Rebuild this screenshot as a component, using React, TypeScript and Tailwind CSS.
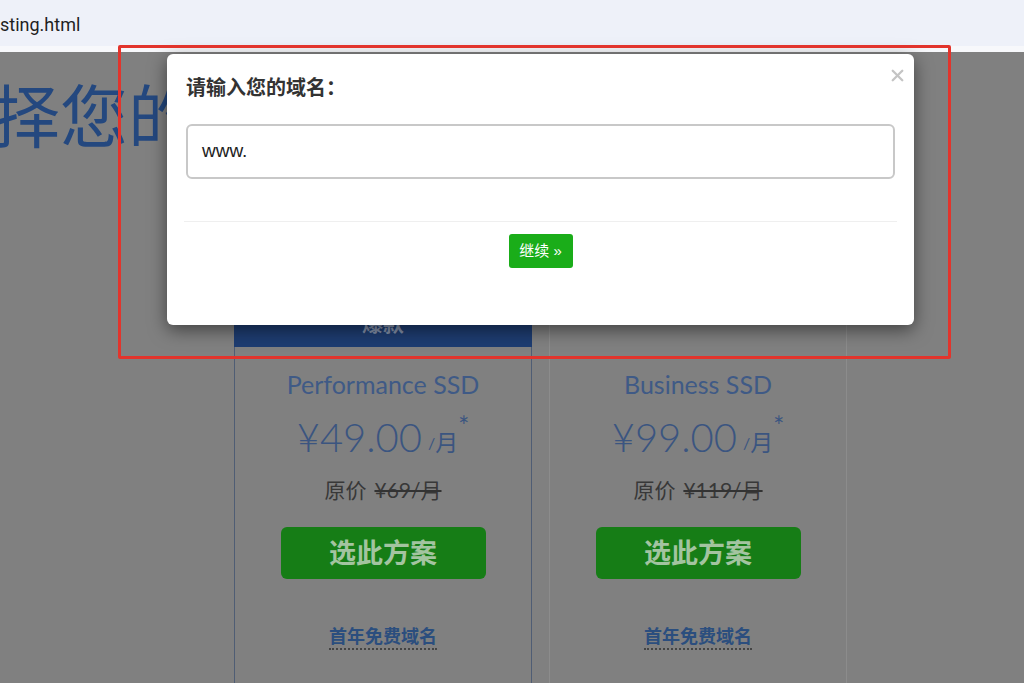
import { X } from 'lucide-react';

type Plan = {
  name: string;
  price: string;
  original: string;
  featured?: boolean;
};

const plans: Plan[] = [
  { name: 'Performance SSD', price: '49.00', original: '¥69/月', featured: true },
  { name: 'Business SSD', price: '99.00', original: '¥119/月' },
];

function PlanCard({ plan }: { plan: Plan }) {
  return (
    <div className="flex w-[298px] flex-col">
      {/* 顶部标签 */}
      {plan.featured ? (
        <div className="flex h-[48px] items-center justify-center bg-[#1e3d72] text-[21px] font-bold text-[#8592ab]">
          爆款
        </div>
      ) : (
        <div className="h-[48px] border-x border-[#8c8c8c]" />
      )}
      <div
        className={
          plan.featured
            ? 'flex h-[400px] flex-col items-center border-x border-[#4f5d74]'
            : 'flex h-[400px] flex-col items-center border-x border-[#8c8c8c]'
        }
      >
        <div className="mt-[22px] text-[25px] leading-[30px] text-[#3f5a86]">{plan.name}</div>
        <div className="mt-[14px] flex items-start text-[#3b5580]">
          <span className="text-[40px] font-light leading-[48px]">¥{plan.price}</span>
          <span className="ml-[6px] mt-[15px] text-[16px] leading-[30px]">/</span>
          <span className="mt-[14px] text-[23px] leading-[30px]">月</span>
          <span className="mt-[-2px] text-[26px] leading-[30px]">*</span>
        </div>
        <div className="mt-[15px] flex items-center text-[21px] leading-[28px] text-[#383838]">
          <span>原价</span>
          <span className="ml-[8px] line-through decoration-[#333] decoration-[1.5px]">{plan.original}</span>
        </div>
        <button className="mt-[23px] flex h-[52px] w-[205px] items-center justify-center rounded-[6px] bg-[#167d16] text-[27px] font-bold text-[#a3c4a0]">
          选此方案
        </button>
        <a className="mt-[45px] border-b-2 border-dotted border-[#444] text-[18px] font-bold leading-[24px] text-[#2b4e7e]">
          首年免费域名
        </a>
      </div>
    </div>
  );
}

export default function App() {
  return (
    <div className="relative h-[683px] w-[1024px] overflow-hidden bg-[#808080] font-['Lato','Noto_Sans_CJK_SC',sans-serif]">
      {/* 浏览器地址栏 */}
      <div className="flex h-[46px] items-center bg-[#eef1f9] pt-[2px] font-['Roboto','Liberation_Sans',sans-serif] text-[18px] text-[#1f1f1f]">
        sting.html
      </div>
      <div className="h-[6px] bg-[#f7f8fb]" />

      {/* 页面内容（遮罩下） */}
      <div className="ml-[-76px] mt-[21px] whitespace-nowrap font-['Noto_Sans_CJK_SC',sans-serif] text-[68px] leading-[80px] text-[#24487f]">
        选择您的主机方案
      </div>
      <div className="ml-[234px] mt-[146px] flex gap-[17px]">
        {plans.map((p) => (
          <PlanCard key={p.name} plan={p} />
        ))}
      </div>

      {/* 弹窗 */}
      <div className="absolute left-[167px] top-[54px] flex h-[271px] w-[747px] flex-col rounded-[6px] bg-white shadow-[0_5px_18px_rgba(0,0,0,0.5)] font-['Liberation_Sans','Noto_Sans_CJK_SC',sans-serif]">
        <button className="absolute right-[7px] top-[12px] text-[#c4c4c4]">
          <X className="h-[19px] w-[19px]" strokeWidth={3} />
        </button>
        <div className="px-[19px] pt-[20px] text-[20px] font-bold leading-[28px] text-[#333]">请输入您的域名：</div>
        <div className="mx-[19px] mt-[22px] flex h-[55px] items-center rounded-[6px] border-2 border-[#c8c8c8] pl-[14px] text-[19px] text-[#222]">
          www.
        </div>
        <div className="mx-[17px] mt-[42px] h-px bg-[#efefef]" />
        <div className="mt-[12px] flex justify-center">
          <button className="flex h-[34px] w-[64px] items-center justify-center rounded-[3px] bg-[#1aad19] text-[15px] text-white">
            继续 »
          </button>
        </div>
      </div>

      {/* 标注框 */}
      <div className="pointer-events-none absolute left-[118px] top-[45px] h-[314px] w-[833px] rounded-[2px] border-[3px] border-[#e2342c]" />
    </div>
  );
}
